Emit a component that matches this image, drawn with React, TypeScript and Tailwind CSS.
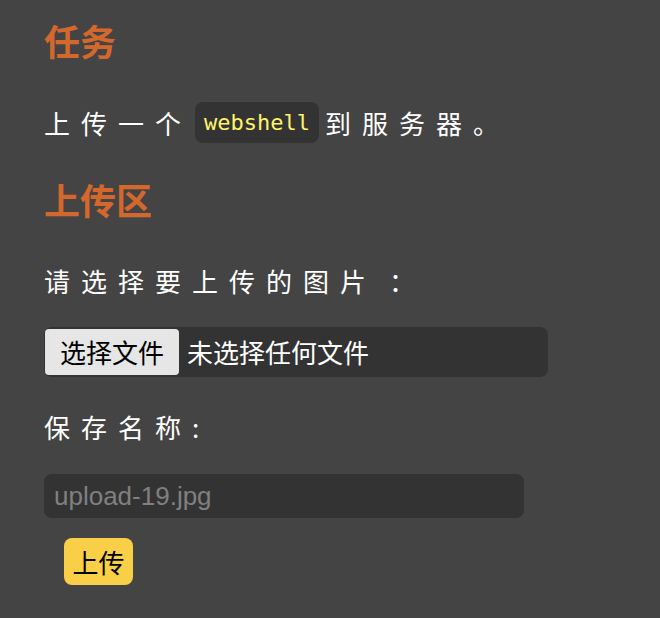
import React from "react";

const cjk = { fontFamily: '"Noto Sans CJK SC", "Noto Sans", sans-serif' };
const latin = { fontFamily: '"Liberation Sans", "Noto Sans CJK SC", sans-serif' };
const mono = { fontFamily: '"DejaVu Sans Mono", "Liberation Mono", monospace' };

export default function App() {
  return (
    <div className="w-[660px] h-[618px] bg-[#444444] overflow-hidden" style={cjk}>
      <div className="flex flex-col items-start pl-[44px] pt-[18px]">
        <h2 className="text-[36px] font-bold leading-[44px] text-[#d4682c]">任务</h2>
        <p className="mt-[40px] flex items-center h-[41px] text-[26px] leading-[41px] text-white tracking-[11px]">
          <span>上传一个</span>
          <code
            className="ml-[3px] mr-[6px] h-[41px] px-[9px] rounded-[8px] bg-[#333333] text-[#fff46a] text-[22px] leading-[41px] tracking-normal"
            style={mono}
          >
            webshell
          </code>
          <span>到服务器。</span>
        </p>
        <h2 className="mt-[34px] text-[36px] font-bold leading-[44px] text-[#d4682c]">上传区</h2>
        <label className="mt-[42px] block text-[26px] leading-[36px] text-white tracking-[11px]">
          请选择要上传的图片<span className="ml-[12px]">：</span>
        </label>
        <div className="mt-[28px] w-[504px] h-[50px] rounded-[8px] bg-[#333333] flex items-center pl-[1px]">
          <div className="h-[46px] px-[15px] rounded-[4px] bg-[#e6e6e6] text-black text-[26px] leading-[46px]">
            选择文件
          </div>
          <span className="ml-[8px] text-white text-[26px] leading-[46px]">未选择任何文件</span>
        </div>
        <label className="mt-[32px] block text-[26px] leading-[36px] text-white tracking-[11px]">
          保存名称:
        </label>
        <div
          className="mt-[29px] w-[480px] h-[44px] rounded-[8px] bg-[#333333] flex items-center pl-[10px] text-[26px] text-[#808080]"
          style={latin}
        >
          upload-19.jpg
        </div>
        <button className="mt-[20px] ml-[20px] w-[69px] h-[47px] rounded-[8px] bg-[#f8cf47] text-black text-[26px] leading-[47px]">
          上传
        </button>
      </div>
    </div>
  );
}
